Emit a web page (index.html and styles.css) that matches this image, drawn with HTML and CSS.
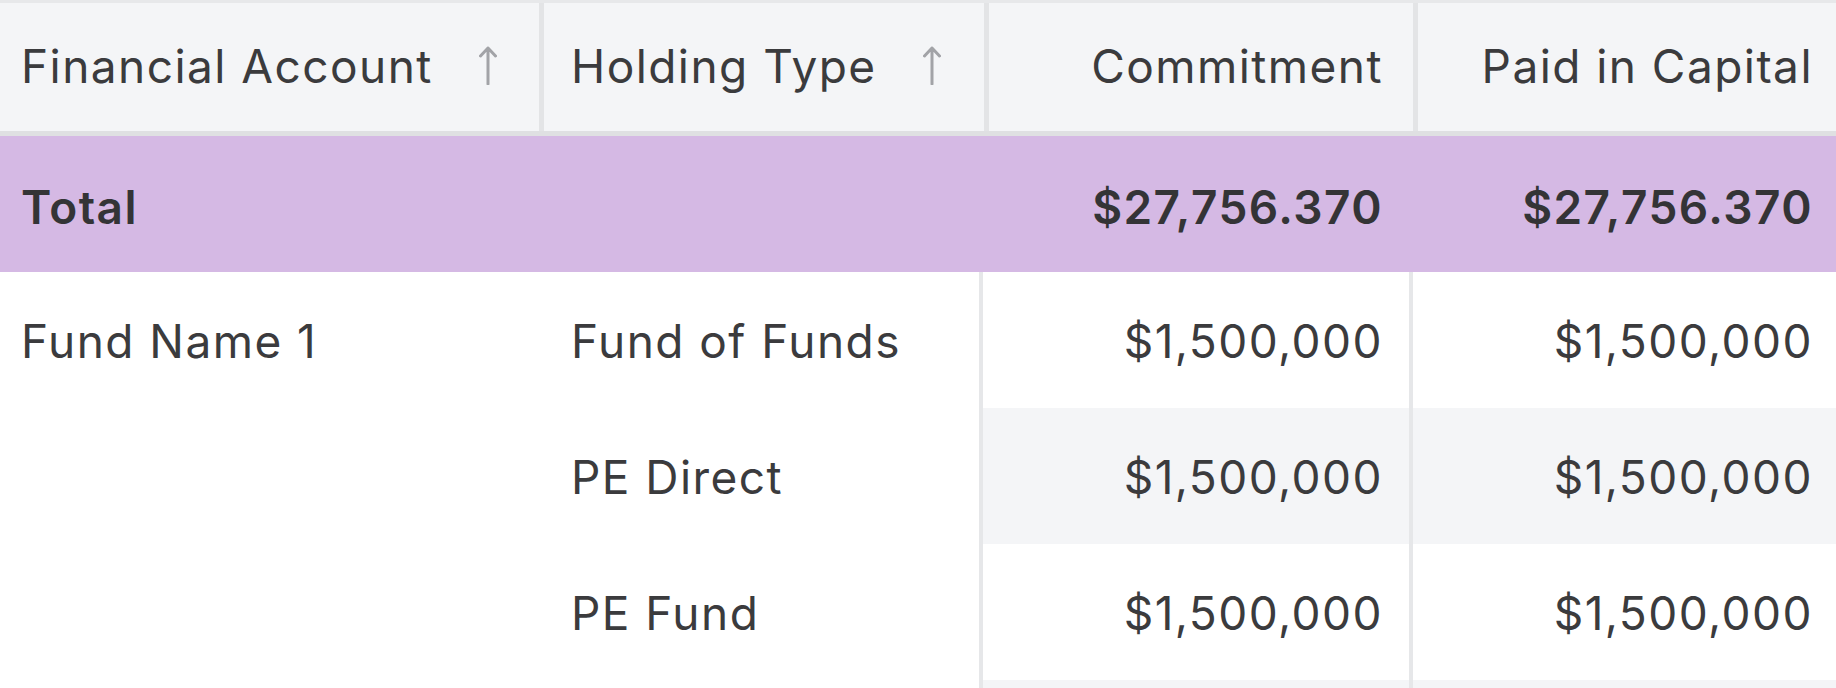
FILE: index.html
```html
<!DOCTYPE html>
<html>
<head>
<meta charset="utf-8">
<link rel="stylesheet" href="styles.css">
</head>
<body>
<div class="grid-table">
  <div class="row head">
    <div class="cell first"><span>Financial Account</span><svg class="sort" viewBox="0 0 18 40"><path d="M9 39V3M1.5 11L9 3l7.5 8"/></svg></div>
    <div class="cell"><span>Holding Type</span><svg class="sort" viewBox="0 0 18 40"><path d="M9 39V3M1.5 11L9 3l7.5 8"/></svg></div>
    <div class="cell num">Commitment</div>
    <div class="cell num">Paid in Capital</div>
  </div>
  <div class="row total">
    <div class="cell first">Total</div>
    <div class="cell"></div>
    <div class="cell num">$27,756.370</div>
    <div class="cell num">$27,756.370</div>
  </div>
  <div class="row body">
    <div class="cell first">Fund Name 1</div>
    <div class="cell">Fund of Funds</div>
    <div class="cell num">$1,500,000</div>
    <div class="cell num">$1,500,000</div>
  </div>
  <div class="row body alt">
    <div class="cell first"></div>
    <div class="cell">PE Direct</div>
    <div class="cell num">$1,500,000</div>
    <div class="cell num">$1,500,000</div>
  </div>
  <div class="row body">
    <div class="cell first"></div>
    <div class="cell">PE Fund</div>
    <div class="cell num">$1,500,000</div>
    <div class="cell num">$1,500,000</div>
  </div>
  <div class="row body alt">
    <div class="cell first"></div>
    <div class="cell"></div>
    <div class="cell num"></div>
    <div class="cell num"></div>
  </div>
</div>
</body>
</html>
```

FILE: styles.css
```css
html, body {
  margin: 0;
  padding: 0;
  background: #ffffff;
  overflow: hidden;
}

.grid-table {
  width: 1843px;
  font-family: Inter, "Noto Sans", sans-serif;
  font-size: 46px;
  letter-spacing: 1.45px;
  color: #3b3b3d;
  border-top: 3px solid #e7e8ea;
}

.row {
  display: grid;
  align-items: stretch;
}

.cell {
  display: flex;
  align-items: center;
  white-space: nowrap;
  padding: 0 27px;
}

.cell.first {
  padding-left: 21px;
}

.cell.num {
  justify-content: flex-end;
}

/* header */
.row.head {
  grid-template-columns: 539px 445px 429px 430px;
  height: 128px;
  background: #f4f5f7;
  border-bottom: 5px solid #dfe0e2;
}

.row.head .cell {
  padding-bottom: 2px;
}

.row.head .cell + .cell {
  border-left: 5px solid #e3e4e6;
}

.row.head .cell.num {
  padding-right: 30px;
}

.sort {
  width: 18px;
  height: 40px;
  margin-left: 46px;
  margin-top: -2px;
  fill: none;
  stroke: #a2a3a7;
  stroke-width: 3;
  stroke-linecap: round;
  stroke-linejoin: round;
}

/* total */
.row.total {
  grid-template-columns: 544px 435px 430px 430px;
  height: 136px;
  background: #d5b9e4;
  font-weight: 600;
  color: #343436;
}

.row.total .cell.num {
  padding-right: 26px;
}

.row.total .cell {
  padding-top: 6px;
}

/* body */
.row.body {
  grid-template-columns: 544px 435px 430px 430px;
  height: 136px;
}

.row.body .cell.num {
  border-left: 4px solid #e6e7e9;
  padding-right: 26px;
}

.row.body .cell {
  padding-top: 2px;
}

.row.body.alt .cell.num {
  background: #f4f5f7;
}
```
